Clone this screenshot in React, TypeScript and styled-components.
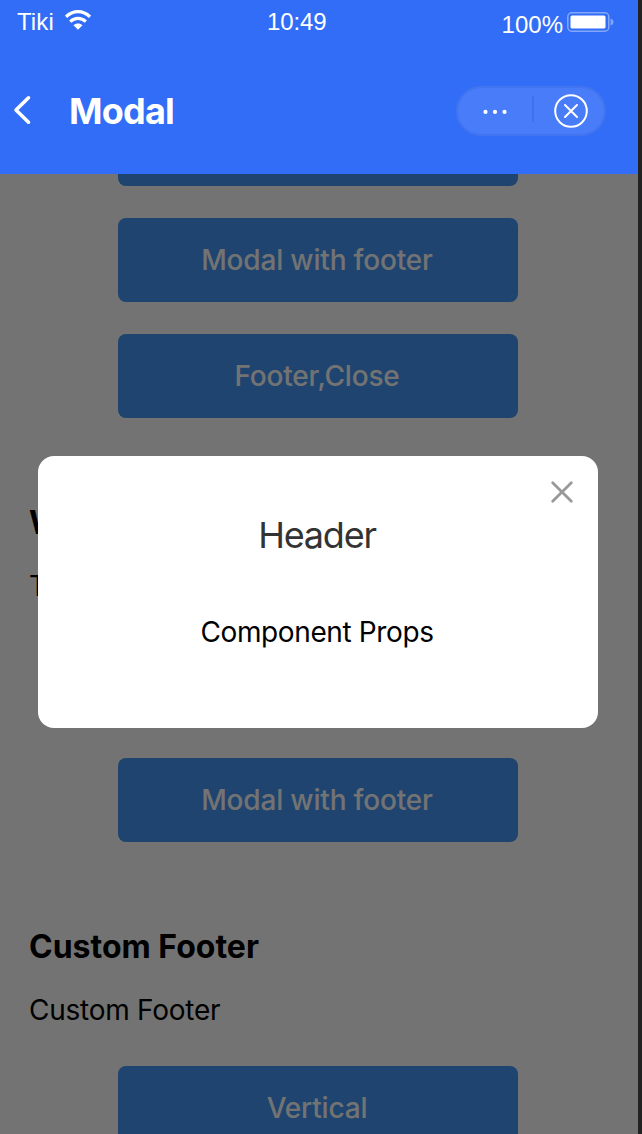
import React from "react";
import styled, { createGlobalStyle } from "styled-components";

const GlobalStyle = createGlobalStyle`
  *, *::before, *::after { box-sizing: border-box; }
  body { margin: 0; background: #222222; overflow: hidden; }
  button { border: 0; padding: 0; background: none; color: inherit; font: inherit; }
`;

const Screen = styled.div`
  position: relative;
  display: flex;
  flex-direction: column;
  width: 638px;
  height: 1134px;
  overflow: hidden;
  background: #ffffff;
  font-family: Inter, "Liberation Sans", sans-serif;
`;

const Header = styled.header`
  position: relative;
  z-index: 3;
  flex: none;
  height: 174px;
  background: #316df7;
  color: #ffffff;
`;

const StatusBar = styled.div`
  display: grid;
  grid-template-columns: 250px 1fr auto;
  height: 44px;
  padding: 0 24px 0 17px;
  font-family: "Liberation Sans", sans-serif;
  font-size: 24px;
  line-height: 44px;
`;

const Carrier = styled.div`
  display: flex;
  gap: 11px;
  letter-spacing: 0.1px;
  svg { margin-top: 9px; }
`;

const Clock = styled.div`
  letter-spacing: -0.1px;
`;

const Power = styled.div`
  display: flex;
  justify-content: flex-end;
  gap: 4px;
  line-height: 50px;
  svg { margin-top: 12px; }
`;

const NavBar = styled.div`
  display: flex;
  align-items: center;
  height: 134px;
  padding: 0 32px 0 12px;
`;

const BackButton = styled.button`
  display: flex;
  width: 20px;
  height: 30px;
  margin-bottom: 2px;
`;

const Title = styled.h1`
  flex: 1;
  margin: 0 0 0 37px;
  font-size: 36px;
  font-weight: 700;
  line-height: 44px;
  letter-spacing: -0.8px;
`;

const Capsule = styled.div`
  display: flex;
  align-items: center;
  width: 150px;
  height: 50px;
  border: 2px solid #4274ef;
  border-radius: 25px;
  background: #487cf8;
`;

const CapsuleButton = styled.button`
  display: flex;
  flex: none;
  width: 74px;
  align-items: center;
  justify-content: center;
`;

const Divider = styled.span`
  flex: none;
  width: 2px;
  height: 26px;
  margin-bottom: 4px;
  background: #4072ec;
`;

const Content = styled.main`
  flex: 1;
  min-height: 0;
  overflow: hidden;
`;

const ButtonList = styled.div<{ $scrolled?: boolean }>`
  display: flex;
  flex-direction: column;
  align-items: center;
  gap: 32px;
  padding-right: 2px;
  margin-top: ${(p) => (p.$scrolled ? "-72px" : "36px")};
`;

const ActionButton = styled.button`
  width: 400px;
  height: 84px;
  padding-right: 2px;
  border-radius: 8px;
  background: #4497f6;
  color: #ffffff;
  font-size: 28px;
  font-weight: 500;
  line-height: 85px;
  letter-spacing: -0.18px;
`;

const Section = styled.section`
  padding-top: 81px;
`;

const SectionTitle = styled.h2`
  margin: 0 0 19px 29px;
  font-size: 32px;
  font-weight: 700;
  line-height: 48px;
  color: #000000;
`;

const SectionText = styled.p`
  margin: 0 0 0 29px;
  font-size: 28px;
  line-height: 40px;
  letter-spacing: -0.25px;
  color: #000000;
`;

const Overlay = styled.div`
  position: absolute;
  inset: 0;
  z-index: 2;
  display: flex;
  align-items: flex-start;
  justify-content: center;
  padding: 456px 2px 0 0;
  background: rgba(0, 0, 0, 0.55);
`;

const Dialog = styled.div`
  position: relative;
  display: flex;
  flex-direction: column;
  align-items: center;
  width: 560px;
  height: 272px;
  padding: 55px 2px 0 0;
  border-radius: 16px;
  background: #ffffff;
`;

const DialogClose = styled.button`
  position: absolute;
  top: 24px;
  right: 24px;
  display: flex;
`;

const DialogTitle = styled.h3`
  margin: 0 0 53px;
  font-size: 36px;
  font-weight: 400;
  line-height: 48px;
  letter-spacing: -1.2px;
  color: #333333;
`;

const DialogBody = styled.p`
  margin: 0;
  font-size: 28px;
  line-height: 40px;
  letter-spacing: -0.38px;
  color: #000000;
`;

const WifiIcon = () => (
  <svg width="26" height="22" viewBox="0 0 26 22" fill="none" stroke="#fff">
    <path d="M1 7.8C7.8 .9 18.2 .9 25 7.8" strokeWidth="3.2" />
    <path d="M5.2 12.6C9.8 8.3 16.2 8.3 20.8 12.6" strokeWidth="3.1" />
    <path d="M8.5 16.2C11 14 15 14 17.5 16.2L13 20.8Z" fill="#fff" stroke="none" />
  </svg>
);

const BatteryIcon = () => (
  <svg width="47" height="20" viewBox="0 0 47 20" fill="none">
    <rect x="0.8" y="0.8" width="41" height="18.4" rx="4" stroke="#83a7fa" strokeWidth="1.5" />
    <rect x="3.5" y="3.5" width="35" height="13" rx="1.6" fill="#fff" />
    <path d="M43.6 6.7C47.4 7.2 47.4 13 43.6 13.5Z" fill="#83a7fa" />
  </svg>
);

export default function App() {
  return (
    <>
      <GlobalStyle />
      <Screen>
        <Header>
          <StatusBar>
            <Carrier>Tiki <WifiIcon /></Carrier>
            <Clock>10:49</Clock>
            <Power>100%<BatteryIcon /></Power>
          </StatusBar>
          <NavBar>
            <BackButton aria-label="Back">
              <svg width="20" height="30" viewBox="0 0 20 30" fill="none" stroke="#fff" strokeWidth="3.6" strokeLinecap="round" strokeLinejoin="round">
                <path d="M16.5 2.8L4 15L16.5 27.2" />
              </svg>
            </BackButton>
            <Title>Modal</Title>
            <Capsule>
              <CapsuleButton aria-label="More">
                <svg width="26" height="6" viewBox="0 0 26 6" fill="#fff">
                  <circle cx="3.5" cy="3.9" r="2.1" />
                  <circle cx="13" cy="3.9" r="2.1" />
                  <circle cx="22.5" cy="3.9" r="2.1" />
                </svg>
              </CapsuleButton>
              <Divider />
              <CapsuleButton aria-label="Close">
                <svg width="36" height="36" viewBox="0 0 36 36" fill="none" stroke="#fff" strokeWidth="2" strokeLinecap="round">
                  <circle cx="18" cy="18" r="15.8" />
                  <path d="M12 12L24 24M24 12L12 24" />
                </svg>
              </CapsuleButton>
            </Capsule>
          </NavBar>
        </Header>
        <Content>
          <ButtonList $scrolled>
            <ActionButton />
            <ActionButton>Modal with footer</ActionButton>
            <ActionButton>Footer,Close</ActionButton>
          </ButtonList>
          <Section>
            <SectionTitle>With Header</SectionTitle>
            <SectionText>Title header</SectionText>
            <ButtonList>
              <ActionButton />
              <ActionButton>Modal with footer</ActionButton>
            </ButtonList>
          </Section>
          <Section>
            <SectionTitle>Custom Footer</SectionTitle>
            <SectionText>Custom Footer</SectionText>
            <ButtonList>
              <ActionButton>Vertical</ActionButton>
            </ButtonList>
          </Section>
        </Content>
        <Overlay>
          <Dialog role="dialog">
            <DialogClose aria-label="Dismiss">
              <svg width="24" height="24" viewBox="0 0 24 24" fill="none" stroke="#999" strokeWidth="2.8" strokeLinecap="round">
                <path d="M2.7 2.7L21.3 21.3M21.3 2.7L2.7 21.3" />
              </svg>
            </DialogClose>
            <DialogTitle>Header</DialogTitle>
            <DialogBody>Component Props</DialogBody>
          </Dialog>
        </Overlay>
      </Screen>
    </>
  );
}
